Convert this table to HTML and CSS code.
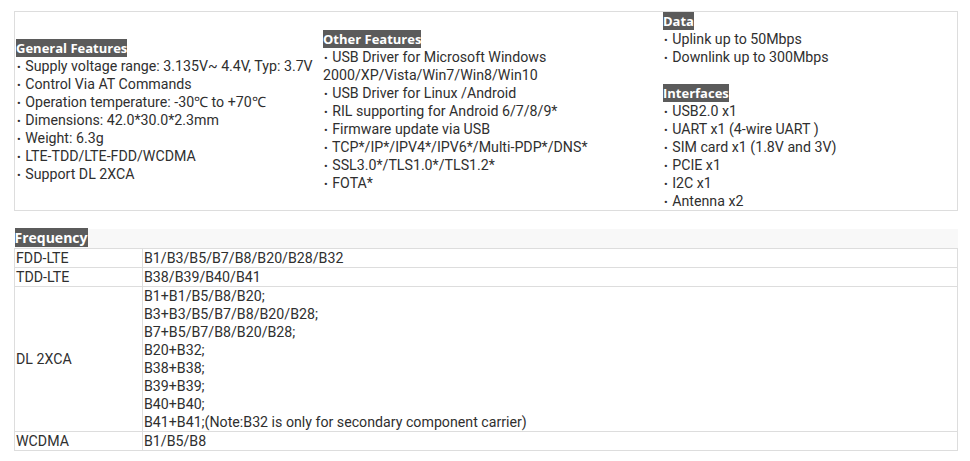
FILE: index.html
```html
<!DOCTYPE html>
<html>
<head>
<meta charset="utf-8">
<link rel="stylesheet" href="styles.css">
</head>
<body>
<div class="features">
  <div class="col c1">
    <div><span class="tag">General Features</span></div>
    <div><span class="b">•</span> Supply voltage range: 3.135V~ 4.4V, Typ: 3.7V</div>
    <div><span class="b">•</span> Control Via AT Commands</div>
    <div><span class="b">•</span> Operation temperature: -30℃ to +70℃</div>
    <div><span class="b">•</span> Dimensions: 42.0*30.0*2.3mm</div>
    <div><span class="b">•</span> Weight: 6.3g</div>
    <div><span class="b">•</span> LTE-TDD/LTE-FDD/WCDMA</div>
    <div><span class="b">•</span> Support DL 2XCA</div>
  </div>
  <div class="col c2">
    <div><span class="tag">Other Features</span></div>
    <div><span class="b">•</span> USB Driver for Microsoft Windows<br>2000/XP/Vista/Win7/Win8/Win10</div>
    <div><span class="b">•</span> USB Driver for Linux /Android</div>
    <div><span class="b">•</span> RIL supporting for Android 6/7/8/9*</div>
    <div><span class="b">•</span> Firmware update via USB</div>
    <div><span class="b">•</span> TCP*/IP*/IPV4*/IPV6*/Multi-PDP*/DNS*</div>
    <div><span class="b">•</span> SSL3.0*/TLS1.0*/TLS1.2*</div>
    <div><span class="b">•</span> FOTA*</div>
  </div>
  <div class="col c3">
    <div><span class="tag">Data</span></div>
    <div><span class="b">•</span> Uplink up to 50Mbps</div>
    <div><span class="b">•</span> Downlink up to 300Mbps</div>
    <div class="blank"></div>
    <div><span class="tag">Interfaces</span></div>
    <div><span class="b">•</span> USB2.0 x1</div>
    <div><span class="b">•</span> UART x1 (4-wire UART )</div>
    <div><span class="b">•</span> SIM card x1 (1.8V and 3V)</div>
    <div><span class="b">•</span> PCIE x1</div>
    <div><span class="b">•</span> I2C x1</div>
    <div><span class="b">•</span> Antenna x2</div>
  </div>
</div>

<table class="freq">
  <thead>
    <tr class="head"><th colspan="2"><span class="tag big">Frequency</span></th></tr>
  </thead>
  <tbody>
    <tr><td class="k">FDD-LTE</td><td>B1/B3/B5/B7/B8/B20/B28/B32</td></tr>
    <tr><td class="k">TDD-LTE</td><td>B38/B39/B40/B41</td></tr>
    <tr><td class="k">DL 2XCA</td><td>B1+B1/B5/B8/B20;<br>B3+B3/B5/B7/B8/B20/B28;<br>B7+B5/B7/B8/B20/B28;<br>B20+B32;<br>B38+B38;<br>B39+B39;<br>B40+B40;<br>B41+B41;(Note:B32 is only for secondary component carrier)</td></tr>
    <tr><td class="k">WCDMA</td><td>B1/B5/B8</td></tr>
  </tbody>
</table>
</body>
</html>
```

FILE: styles.css
```css
html, body {
  margin: 0;
  padding: 0;
  background: #ffffff;
}
body {
  padding: 11px 12px 0 14px;
  font-family: Roboto, "Open Sans", "Liberation Sans", sans-serif;
  font-size: 14.2px;
  line-height: 18px;
  color: #2f2f2f;
}
.features {
  width: 942px;
  border: 1px solid #dddddd;
  display: grid;
  grid-template-columns: 308px 340px 1fr;
  align-items: center;
}
.col { padding: 0; }
.c1 { padding-left: 1px; }
.blank { height: 18px; }
.b {
  font-size: 11px;
  line-height: 0;
  padding: 0 1px;
}
.tag {
  background: #5b5b5b;
  color: #ffffff;
  font-family: "Open Sans", sans-serif;
  font-weight: 700;
  font-size: 13px;
  line-height: 0;
}
.tag.big { font-size: 14px; }
.freq {
  margin-top: 18px;
  width: 944px;
  border-collapse: collapse;
}
.freq th {
  text-align: left;
  padding: 0;
  background: #f8f8f8;
  line-height: 19px;
  font-weight: 700;
}
.freq td {
  border: 1px solid #dddddd;
  padding: 0 1px;
  vertical-align: middle;
}
.freq td.k { width: 125px; }
```
